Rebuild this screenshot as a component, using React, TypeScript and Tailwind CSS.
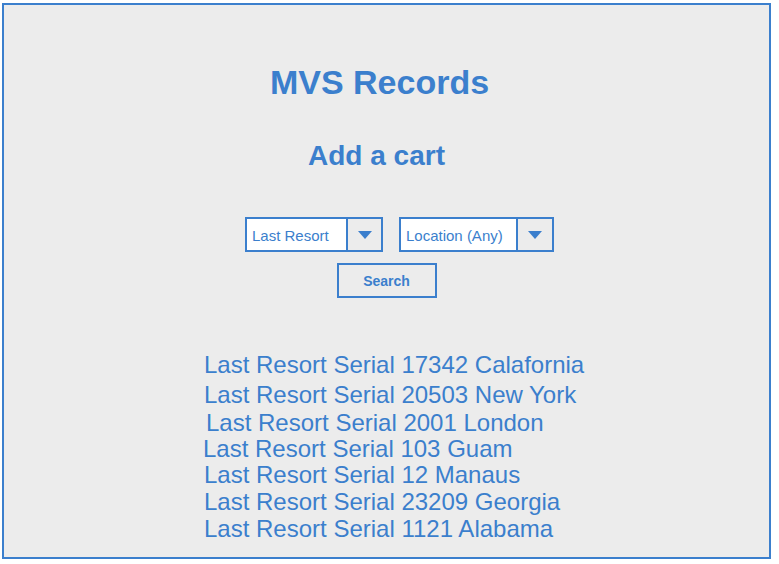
import React from "react";

const BLUE = "#3b7fcd";

function Arrow() {
  return (
    <svg width="14" height="8" viewBox="0 0 14 8">
      <polygon points="0,0 14,0 7,8" fill={BLUE} />
    </svg>
  );
}

function Select({ label, textW, arrowW }: { label: string; textW: number; arrowW: number }) {
  return (
    <div className="flex h-[35px] border-2 border-[#3b7fcd] bg-white">
      <div
        className="flex items-center pl-[5px] pt-[2px] text-[15px] leading-[15px] text-[#3b7fcd]"
        style={{ width: textW }}
      >
        {label}
      </div>
      <div
        className="flex items-center justify-center border-l-2 border-[#3b7fcd] bg-[#ececec]"
        style={{ width: arrowW }}
      >
        <Arrow />
      </div>
    </div>
  );
}

const items: { text: string; cls: string }[] = [
  { text: "Last Resort Serial 17342 Calafornia", cls: "mt-0 ml-0" },
  { text: "Last Resort Serial 20503 New York", cls: "mt-[6px] ml-0" },
  { text: "Last Resort Serial 2001 London", cls: "mt-[4px] ml-[2px]" },
  { text: "Last Resort Serial 103 Guam", cls: "mt-[2px] -ml-[1px]" },
  { text: "Last Resort Serial 12 Manaus", cls: "mt-[2px] ml-0" },
  { text: "Last Resort Serial 23209 Georgia", cls: "mt-[3px] ml-0" },
  { text: "Last Resort Serial 1121 Alabama", cls: "mt-[3px] ml-0" },
];

export default function App() {
  return (
    <div className="w-[779px] h-[564px] bg-white pt-[3px] pl-[2px] font-['Liberation_Sans',Arial,sans-serif]">
      <div className="flex h-[556px] w-[769px] flex-col border-2 border-[#3b7fcd] bg-[#ececec] pt-[60px]">
        <h1 className="mr-[14px] self-center text-[34px] font-bold leading-[34px] text-[#3b7fcd]">
          MVS Records
        </h1>
        <h2 className="mr-[20px] mt-[43px] self-center text-[28px] font-bold leading-[28px] text-[#3b7fcd]">
          Add a cart
        </h2>
        <div className="ml-[26px] mt-[47px] flex gap-[16px] self-center">
          <Select label="Last Resort" textW={99} arrowW={35} />
          <Select label="Location (Any)" textW={115} arrowW={36} />
        </div>
        <button className="mt-[11px] flex h-[35px] w-[100px] items-center justify-center self-center border-2 border-[#3b7fcd] text-[14px] font-bold leading-[14px] text-[#3b7fcd]">
          Search
        </button>
        <div className="mt-[55px] flex flex-col items-start pl-[200px]">
          {items.map((it) => (
            <div
              key={it.text}
              className={`whitespace-nowrap text-[24px] leading-[24px] text-[#3b7fcd] ${it.cls}`}
            >
              {it.text}
            </div>
          ))}
        </div>
      </div>
    </div>
  );
}
